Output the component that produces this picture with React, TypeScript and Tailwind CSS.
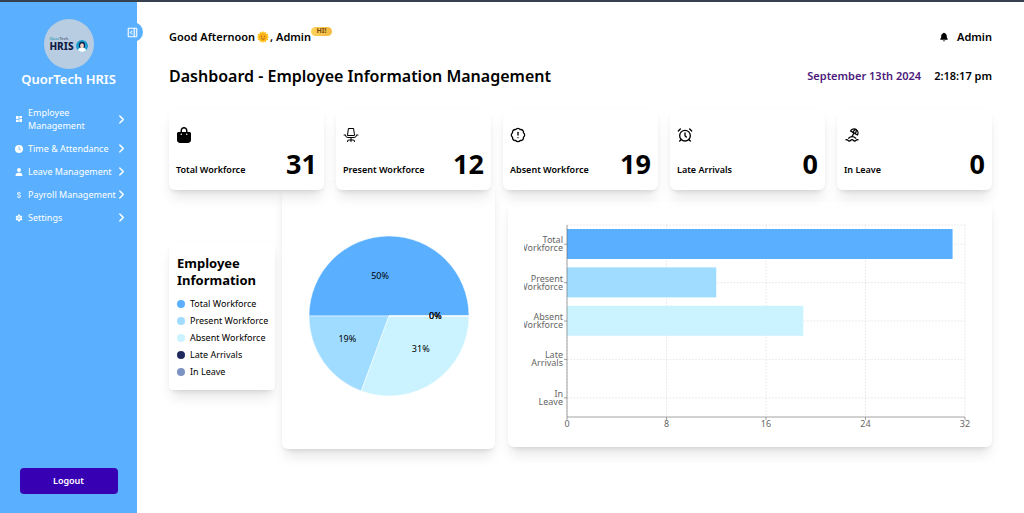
import React from "react";
import type { ReactNode } from "react";
import type { IconType } from "react-icons";
import { AiFillSetting } from "react-icons/ai";
import { BiDollar } from "react-icons/bi";
import { FaBagShopping, FaChevronRight, FaClock, FaUser } from "react-icons/fa6";
import { GoSidebarExpand } from "react-icons/go";
import { IoNotifications } from "react-icons/io5";
import { LuAlarmClock, LuBadgeAlert } from "react-icons/lu";
import { MdDashboard } from "react-icons/md";
import { PiOfficeChair } from "react-icons/pi";
import { TbBeach } from "react-icons/tb";

type Stat = {
  label: string;
  value: number;
  color: string;
  icon: IconType;
};

const stats: Stat[] = [
  { label: "Total Workforce", value: 31, color: "#5ab0ff", icon: FaBagShopping },
  { label: "Present Workforce", value: 12, color: "#a0dcff", icon: PiOfficeChair },
  { label: "Absent Workforce", value: 19, color: "#caf3ff", icon: LuBadgeAlert },
  { label: "Late Arrivals", value: 0, color: "#1e2a5e", icon: LuAlarmClock },
  { label: "In Leave", value: 0, color: "#7c93c3", icon: TbBeach },
];

const links: { label: string; icon: IconType }[] = [
  { label: "Employee Management", icon: MdDashboard },
  { label: "Time & Attendance", icon: FaClock },
  { label: "Leave Management", icon: FaUser },
  { label: "Payroll Management", icon: BiDollar },
  { label: "Settings", icon: AiFillSetting },
];

function Logo() {
  return (
    <div className="flex size-[50px] items-center justify-center gap-[2px] rounded-full bg-[#b9cde2]">
      <div className="flex flex-col text-[#111c44]">
        <span className="text-[4px] leading-[4px] font-semibold text-[#3a9fb5]">
          Quor<span className="text-[#5b6b85]">Tech</span>
        </span>
        <span className="text-[10px] leading-[10px] font-extrabold">HRIS</span>
      </div>
      <svg viewBox="0 0 24 24" className="mt-1 size-3" aria-hidden="true">
        <circle cx="12" cy="12" r="12" fill="#1c9fd0" />
        <path d="M6 13c-1-7 2-9.500 6-9.500s7 2.500 6 9.500l-2 3H8z" fill="#14254f" />
        <ellipse cx="12" cy="11.500" rx="3.800" ry="5" fill="#f3d3c2" />
        <path d="M3.500 20.500c1-4 4.500-5 8.500-5s7.500 1 8.500 5A12 12 0 0 1 12 24a12 12 0 0 1-8.500-3.500z" fill="#fff" />
      </svg>
    </div>
  );
}

function Sidebar() {
  return (
    <aside className="relative z-20 flex w-[137px] shrink-0 flex-col items-center bg-[#5ab0ff] pt-[17px] pb-[19px] text-white">
      <button
        type="button"
        aria-label="Collapse sidebar"
        className="absolute top-5 -right-[6px] flex size-5 items-center justify-center rounded-full bg-[#5ab0ff]"
      >
        <GoSidebarExpand className="mr-[2px] size-[11px] stroke-white stroke-1" />
      </button>
      <Logo />
      <h1 className="text-[13px] leading-5 font-semibold">QuorTech HRIS</h1>
      <nav className="mt-[17px] flex w-full flex-col gap-[10px] pr-[13px] pl-[15px]">
        {links.map(({ label, icon: Icon }) => (
          <a key={label} href="#" className="flex items-center text-[9px] leading-[13px]">
            <Icon className="mr-[5px] size-2 shrink-0" />
            <span className="flex-1">{label}</span>
            <FaChevronRight className="h-[9px] w-[6px] shrink-0 stroke-white stroke-[30]" />
          </a>
        ))}
      </nav>
      <button
        type="button"
        className="mt-auto h-[26px] w-[98px] rounded bg-[#3700b3] text-[9px] font-semibold"
      >
        Logout
      </button>
    </aside>
  );
}

function SunFace() {
  return (
    <svg viewBox="0 0 24 24" className="size-3" role="img" aria-label="Sun with face">
      <path
        d="M12 0l2.500 3.200L18 1.600l.7 4L22.700 6l-1.300 3.800L24 12l-2.600 2.300L22.700 18l-4 .5-.7 4-3.500-1.600L12 24l-2.500-3.100L6 22.500l-.7-4-4-.5 1.300-3.700L0 12l2.600-2.200L1.300 6l4-.4.7-4 3.500 1.600z"
        fill="#ffca28"
      />
      <circle cx="12" cy="12" r="8" fill="#fbb01c" />
      <circle cx="9" cy="10.500" r="1.200" fill="#8a4b10" />
      <circle cx="15" cy="10.500" r="1.200" fill="#8a4b10" />
      <path d="M8.500 14.500c2 2.300 5 2.300 7 0" fill="none" stroke="#8a4b10" strokeWidth="1.400" />
    </svg>
  );
}

function Card({ className, children }: { className: string; children: ReactNode }) {
  return (
    <section className={`bg-white shadow-[0_10px_13px_-3px_rgb(0_0_0/0.1),0_4px_5px_-3px_rgb(0_0_0/0.1),0_0_6px_rgb(0_0_0/0.02)] ${className}`}>
      {children}
    </section>
  );
}

function StatCard({ label, value, icon: Icon }: Stat) {
  return (
    <Card className="flex h-20 flex-col justify-between rounded-md px-[7px] pt-[17px] pb-[9px]">
      <Icon className="size-4" />
      <div className="flex items-center justify-between">
        <h3 className="mt-[11px] text-[9px] leading-3 font-semibold">{label}</h3>
        <p className="text-[27px] leading-[34px] font-bold">{value}</p>
      </div>
    </Card>
  );
}

function PieChart() {
  const cx = 80;
  const cy = 80;
  const r = 80;
  const total = stats.reduce((sum, s) => sum + s.value, 0);
  let angle = 0;
  const slices = stats.map((s) => {
    const start = angle;
    const end = start + (s.value / total) * Math.PI * 2;
    angle = end;
    const point = (a: number, d: number) => [cx + d * Math.cos(a), cy - d * Math.sin(a)];
    const [x1, y1] = point(start, r);
    const [x2, y2] = point(end, r);
    const [tx, ty] = point((start + end) / 2, r / 2);
    return {
      ...s,
      path: `M${cx} ${cy}L${x1} ${y1}A${r} ${r} 0 0 0 ${x2} ${y2}Z`,
      tx,
      ty,
      anchor: tx > cx + 1 ? ("start" as const) : ("end" as const),
      percent: `${Math.round((s.value / total) * 100)}%`,
    };
  });
  return (
    <svg viewBox="0 0 160 160" className="w-40 overflow-visible" role="img" aria-label="Workforce share">
      {slices.map((s) => (
        <path key={s.label} d={s.path} fill={s.color} stroke="#fff" strokeWidth="0.500" />
      ))}
      {slices.map((s) => (
        <text key={s.label} x={s.tx} y={s.ty} dy="3" textAnchor={s.anchor} className="fill-black text-[9px]">
          {s.percent}
        </text>
      ))}
    </svg>
  );
}

function BarChart() {
  const left = 43;
  const right = 441;
  const top = 8;
  const bottom = 200;
  const max = 32;
  const band = (bottom - top) / stats.length;
  const x = (v: number) => left + (v / max) * (right - left);
  const ticks = [0, 8, 16, 24, 32];
  return (
    <svg viewBox="0 0 452 214" className="w-full" role="img" aria-label="Workforce counts">
      <g stroke="#ccc" strokeWidth="0.500" strokeDasharray="1.600 1.600">
        <path d={`M${left} ${top}H${right}`} />
        {stats.map((s, i) => (
          <path key={s.label} d={`M${left} ${top + band * (i + 0.5)}H${right}`} />
        ))}
        {ticks.map((t) => (
          <path key={t} d={`M${x(t)} ${top}V${bottom}`} />
        ))}
      </g>
      {stats.map((s, i) => (
        <rect key={s.label} x={left} y={top + band * i + 4} width={x(s.value) - left} height="30" fill={s.color} />
      ))}
      <g stroke="#666" strokeWidth="0.600">
        <path d={`M${left} ${top}V${bottom}H${right}`} fill="none" />
        {ticks.map((t) => (
          <path key={t} d={`M${x(t)} ${bottom}v3`} />
        ))}
        {stats.map((s, i) => (
          <path key={s.label} d={`M${left} ${top + band * (i + 0.5)}h-3`} />
        ))}
      </g>
      <g className="fill-[#666] text-[9px]">
        {ticks.map((t) => (
          <text key={t} x={x(t)} y={bottom + 10} textAnchor="middle">
            {t}
          </text>
        ))}
        {stats.map((s, i) =>
          s.label.split(" ").map((word, line) => (
            <text key={word + i} x={left - 4} y={top + band * (i + 0.5) - 1 + line * 8} textAnchor="end">
              {word}
            </text>
          ))
        )}
      </g>
    </svg>
  );
}

export default function App() {
  return (
    <div className="flex min-h-screen flex-col bg-white font-['Noto_Sans',sans-serif] text-black">
      <div className="h-[2px] bg-[#36414f]" />
      <div className="flex flex-1">
        <Sidebar />
        <main className="min-w-0 flex-1 px-8 pt-6 pb-8">
          <header className="flex items-center justify-between text-[11px] leading-[22px] font-semibold">
            <p className="flex items-center">
              Good Afternoon
              <span className="mr-px ml-[2px]">
                <SunFace />
              </span>
              , Admin
              <span className="mb-3 flex h-[9px] w-[21px] items-center justify-center rounded-full bg-gradient-to-r from-[#fbd45c] to-[#f5b83d] text-[7px] font-bold text-[#7a4a12]">
                HI!
              </span>
            </p>
            <div className="flex items-center gap-2">
              <button type="button" aria-label="Notifications">
                <IoNotifications className="size-[10px]" />
              </button>
              Admin
            </div>
          </header>

          <div className="mt-4 flex items-center justify-between">
            <h2 className="text-base font-semibold">Dashboard - Employee Information Management</h2>
            <div className="flex gap-[13px] text-[11px] leading-6 font-semibold">
              <p className="text-[#4b1a7a]">September 13th 2024</p>
              <p>2:18:17 pm</p>
            </div>
          </div>

          <div className="relative z-10 mt-[22px] grid grid-cols-5 gap-3">
            {stats.map((s) => (
              <StatCard key={s.label} {...s} />
            ))}
          </div>

          <div className="-mt-[7px] grid grid-cols-[326fr_484fr] items-end gap-[13px]">
            <div className="flex items-center gap-[7px]">
              <Card className="w-[106px] shrink-0 rounded px-2 pt-[13px] pb-[10px]">
                <h3 className="text-[13px] leading-[17px] font-bold">Employee Information</h3>
                <ul className="mt-[6px]">
                  {stats.map((s) => (
                    <li key={s.label} className="flex items-center gap-[5px] text-[9px] leading-[17px] whitespace-nowrap">
                      <span className="size-2 shrink-0 rounded-full" style={{ backgroundColor: s.color }} />
                      {s.label}
                    </li>
                  ))}
                </ul>
              </Card>
              <Card className="flex h-[266px] min-w-0 flex-1 items-center justify-center rounded-md">
                <PieChart />
              </Card>
            </div>
            <Card className="mb-[2px] rounded-md p-4">
              <BarChart />
            </Card>
          </div>
        </main>
      </div>
    </div>
  );
}
